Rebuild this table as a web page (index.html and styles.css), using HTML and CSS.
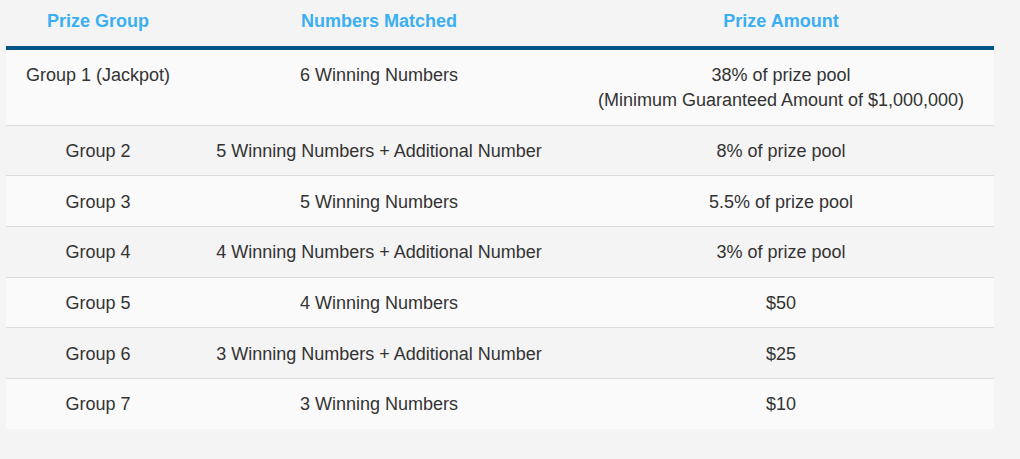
FILE: index.html
```html
<!DOCTYPE html>
<html>
<head>
<meta charset="utf-8">
<link rel="stylesheet" href="styles.css">
</head>
<body>
<div class="wrap">
<table class="prizes">
  <colgroup>
    <col class="c1"><col class="c2"><col class="c3">
  </colgroup>
  <thead>
    <tr><th>Prize Group</th><th>Numbers Matched</th><th>Prize Amount</th></tr>
  </thead>
  <tbody>
    <tr><td>Group 1 (Jackpot)</td><td>6 Winning Numbers</td><td>38% of prize pool<br>(Minimum Guaranteed Amount of $1,000,000)</td></tr>
    <tr><td>Group 2</td><td>5 Winning Numbers + Additional Number</td><td>8% of prize pool</td></tr>
    <tr><td>Group 3</td><td>5 Winning Numbers</td><td>5.5% of prize pool</td></tr>
    <tr><td>Group 4</td><td>4 Winning Numbers + Additional Number</td><td>3% of prize pool</td></tr>
    <tr><td>Group 5</td><td>4 Winning Numbers</td><td>$50</td></tr>
    <tr><td>Group 6</td><td>3 Winning Numbers + Additional Number</td><td>$25</td></tr>
    <tr><td>Group 7</td><td>3 Winning Numbers</td><td>$10</td></tr>
  </tbody>
</table>
</div>
</body>
</html>
```

FILE: styles.css
```css
html, body {
  margin: 0;
  padding: 0;
  background: #f4f4f4;
}
body {
  font-family: "Liberation Sans", Arial, sans-serif;
  font-size: 18px;
  color: #333;
}
.wrap {
  padding: 0 6px;
}
.prizes {
  width: 988px;
  border-collapse: collapse;
  table-layout: fixed;
}
.c1 { width: 184px; }
.c2 { width: 378px; }
.c3 { width: 426px; }
.prizes th {
  color: #3aaff2;
  font-weight: bold;
  font-size: 18px;
  height: 42px;
  padding: 0 4px 4px;
  text-align: center;
  vertical-align: middle;
  border-bottom: 4px solid #005689;
}
.prizes td {
  text-align: center;
  vertical-align: top;
  padding: 13.3px 4px 11.4px;
  line-height: 25px;
  border-bottom: 1px solid #dcdcdc;
}
.prizes tbody tr:nth-child(odd) td { background: #fafafa; }
.prizes tbody tr:nth-child(even) td { background: #f4f4f4; }
.prizes tbody tr:last-child td { border-bottom: none; }
```
